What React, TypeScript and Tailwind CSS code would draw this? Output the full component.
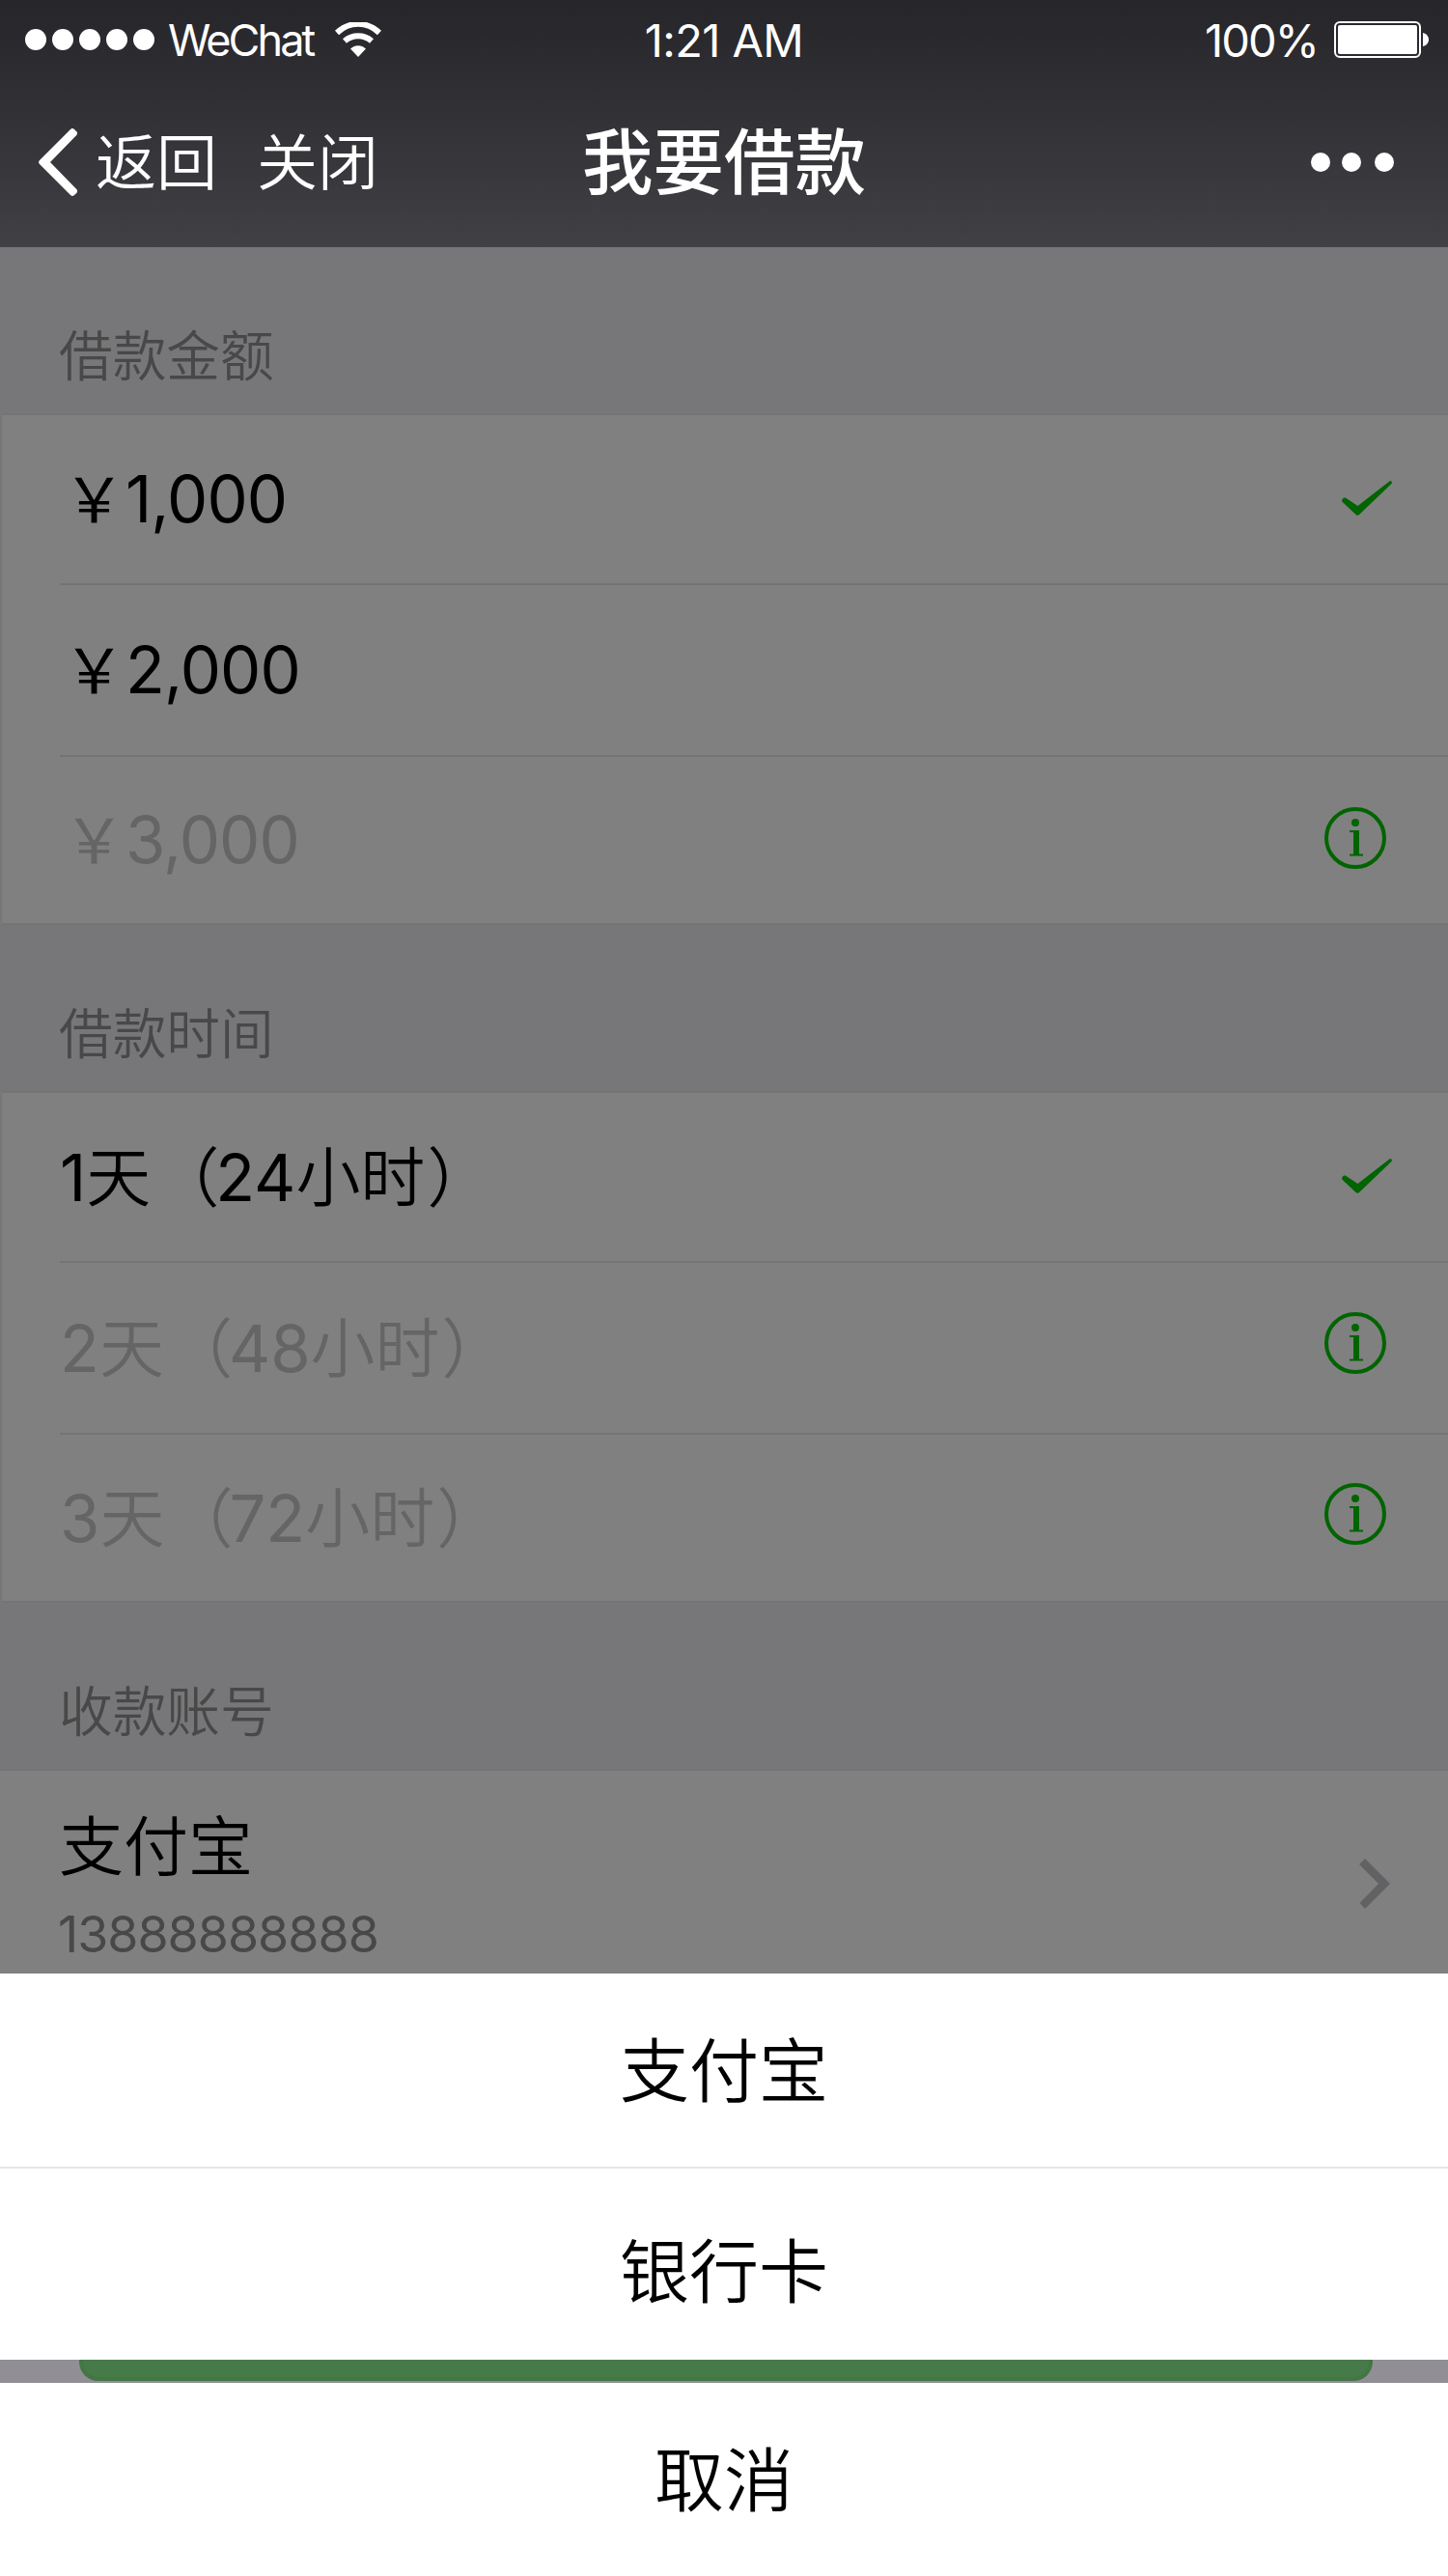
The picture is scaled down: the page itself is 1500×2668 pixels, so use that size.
import type { ReactNode } from 'react';

function Check() {
  return (
    <svg className="mb-0.5 mr-[58px] h-[36px] w-[52px]" viewBox="0 0 52 36" fill="#006400">
      <path d="M1 18.5C2 17.3 3 17.4 4.5 18L16.5 26L49 .7C50.2 -.2 51 0 51.6 .9C52.2 2 51.8 2.8 50.9 3.6L18.5 34.4C17.2 36 15.7 36 14.3 34.8L1 22.3C-.3 21 -.2 19.8 1 18.5Z" />
    </svg>
  );
}

function Info({ className = 'mb-2' }: { className?: string }) {
  return (
    <svg className={`mr-16 size-16 ${className}`} viewBox="0 0 64 64" fill="#006400">
      <circle cx="32" cy="32" r="30" fill="none" stroke="#006400" strokeWidth="4" />
      <circle cx="32" cy="16" r="4" />
      <path d="M26 24H36V48.5H40V50.5H26V48.5H30V26H26Z" />
    </svg>
  );
}

function Label({ children }: { children: ReactNode }) {
  return <h2 className="pl-[61px] text-[55.700px] font-[350] leading-[60px] text-[#484848]">{children}</h2>;
}

type RowProps = { children: ReactNode; height: string; muted?: boolean; icon?: ReactNode; divider?: boolean };

function Row({ children, height, muted, icon, divider = true }: RowProps) {
  return (
    <div className={`ml-[60px] flex items-center justify-between ${height} ${divider ? 'border-b-2 border-[#747474]' : ''}`}>
      <span className={`pt-px text-[67px] leading-[80px] ${muted ? 'text-[#656565]' : 'text-black'}`}>{children}</span>
      {icon}
    </div>
  );
}

function Amount({ value }: { value: string }) {
  return (
    <span className="font-normal tracking-[-0.900px]">
      <span className="inline-block w-[68px] pl-0.5 text-center text-[64px] leading-[80px]">￥</span>
      {value}
    </span>
  );
}

function Duration({ days, hours }: { days: number; hours: number }) {
  return (
    <>
      <span className="font-normal">{days}</span>天<span className="relative left-1">（</span>
      <span className="font-normal">{hours}</span>小时<span className="relative left-0.5">）</span>
    </>
  );
}

function Wifi() {
  return (
    <svg className="ml-[23px] h-[36px] w-[48px]" viewBox="0 0 48 36" fill="none">
      <path d="M2 11C15-1.200 33-1.200 46 11" stroke="#fff" strokeWidth="6" />
      <path d="M10 19.500C18 12.500 30 12.500 38 19.500" stroke="#fff" strokeWidth="6" />
      <path d="M16 27.500C20.500 23 27.500 23 32 27.500L24 36Z" fill="#fff" />
    </svg>
  );
}

export default function App() {
  return (
    <div className="relative h-[2668px] w-[1500px] overflow-hidden bg-[#777779] font-['Inter','Noto_Sans_CJK_SC',sans-serif]">
      <header className="h-[256px] bg-linear-to-b from-[#26252a] to-[#414145] text-white">
        <div className="grid h-[82px] grid-cols-[1fr_auto_1fr] items-center">
          <div className="flex items-center pl-[26px]">
            <div className="flex gap-[6px]">
              {[0, 1, 2, 3, 4].map((n) => (
                <span key={n} className="size-[22px] rounded-full bg-white" />
              ))}
            </div>
            <span className="ml-[14px] pt-0.5 text-[45px] leading-[50px] tracking-[-2.900px]">WeChat</span>
            <Wifi />
          </div>
          <span className="pt-px text-[47px] leading-[50px] tracking-[-0.600px]">1:21 AM</span>
          <div className="flex items-center justify-end pr-5">
            <span className="pt-px text-[47px] leading-[50px] tracking-[-1.900px]">100%</span>
            <svg className="ml-[17px] h-[38px] w-[98px]" viewBox="0 0 98 38" fill="#fff">
              <rect x="1" y="1" width="88" height="36" rx="5" fill="none" stroke="#fff" strokeWidth="2" />
              <rect x="4" y="4" width="82" height="30" rx="2" />
              <path d="M92 12C96 13 98 16 98 19S96 25 92 26Z" />
            </svg>
          </div>
        </div>
        <div className="grid h-[174px] grid-cols-[1fr_auto_1fr] items-center pb-0.5">
          <div className="flex items-center pl-10">
            <svg className="h-[70px] w-[40px]" viewBox="0 0 40 70" fill="#fff">
              <path d="M33 1Q35 -.8 37 1L39.300 3.300Q41 5 39.300 7L12 35L39.300 63Q41 65 39.300 67L37 69Q35 71 33 69L1 37Q-.8 35 1 33Z" />
            </svg>
            <span className="ml-[19px] text-[63px] font-[350] leading-[80px]">返回</span>
            <span className="ml-[41px] text-[63px] font-[350] leading-[80px]">关闭</span>
          </div>
          <h1 className="pt-0.5 text-[73.500px] font-medium leading-[90px]">我要借款</h1>
          <div className="flex items-center justify-end pr-14">
            <span className="size-5 rounded-full bg-white" />
            <span className="ml-3 size-5 rounded-full bg-white" />
            <span className="ml-3.5 size-5 rounded-full bg-white" />
          </div>
        </div>
      </header>

      <section>
        <div className="flex h-[172px] items-end pb-[29px]"><Label>借款金额</Label></div>
        <div className="ml-0.5 border-y-2 border-[#747474] bg-[#808080] font-[350]">
          <Row height="h-[176px]" icon={<Check />}><Amount value="1,000" /></Row>
          <Row height="h-[178px]"><Amount value="2,000" /></Row>
          <Row height="h-[172px]" muted icon={<Info className="mb-1" />} divider={false}><Amount value="3,000" /></Row>
        </div>
      </section>

      <section>
        <div className="flex h-[172px] items-end pb-[29px]"><Label>借款时间</Label></div>
        <div className="ml-0.5 border-y-2 border-[#747474] bg-[#808080] font-[350]">
          <Row height="h-[176px]" icon={<Check />}><Duration days={1} hours={24} /></Row>
          <Row height="h-[178px]" muted icon={<Info className="mb-2.5" />}><Duration days={2} hours={48} /></Row>
          <Row height="h-[172px]" muted icon={<Info />} divider={false}><Duration days={3} hours={72} /></Row>
        </div>
      </section>

      <section>
        <div className="flex h-[172px] items-end pb-[29px]"><Label>收款账号</Label></div>
        <div className="flex h-[236px] items-center justify-between border-t-2 border-[#747474] bg-[#808080] pl-[61px] pr-[60px] font-[350]">
          <div className="flex flex-col pt-4">
            <span className="text-[67px] leading-[90px] text-black">支付宝</span>
            <span className="-ml-px text-[52px] font-normal leading-[92px] tracking-[-1px] text-[#484848]">13888888888</span>
          </div>
          <svg className="h-[52px] w-8" viewBox="0 0 32 52" fill="#626264">
            <path d="M6 0L32 26L6 52L.5 46L20 26L0 6Z" />
          </svg>
        </div>
      </section>

      <div className="absolute inset-x-0 bottom-0 flex h-[624px] flex-col text-center text-[72px] font-[350] text-black">
        <button className="block h-[202px] border-b-2 border-[#e5e5e5] bg-white pt-0.5">支付宝</button>
        <button className="block h-[198px] bg-white pt-4">银行卡</button>
        <div className="h-6 bg-[#918f95] pl-[82px] pr-[78px]">
          <div className="h-[22px] rounded-b-[20px] border-x-4 border-b-4 border-[#447644] bg-[#467b49]" />
        </div>
        <button className="block h-[200px] bg-white pt-0.5">取消</button>
      </div>
    </div>
  );
}
